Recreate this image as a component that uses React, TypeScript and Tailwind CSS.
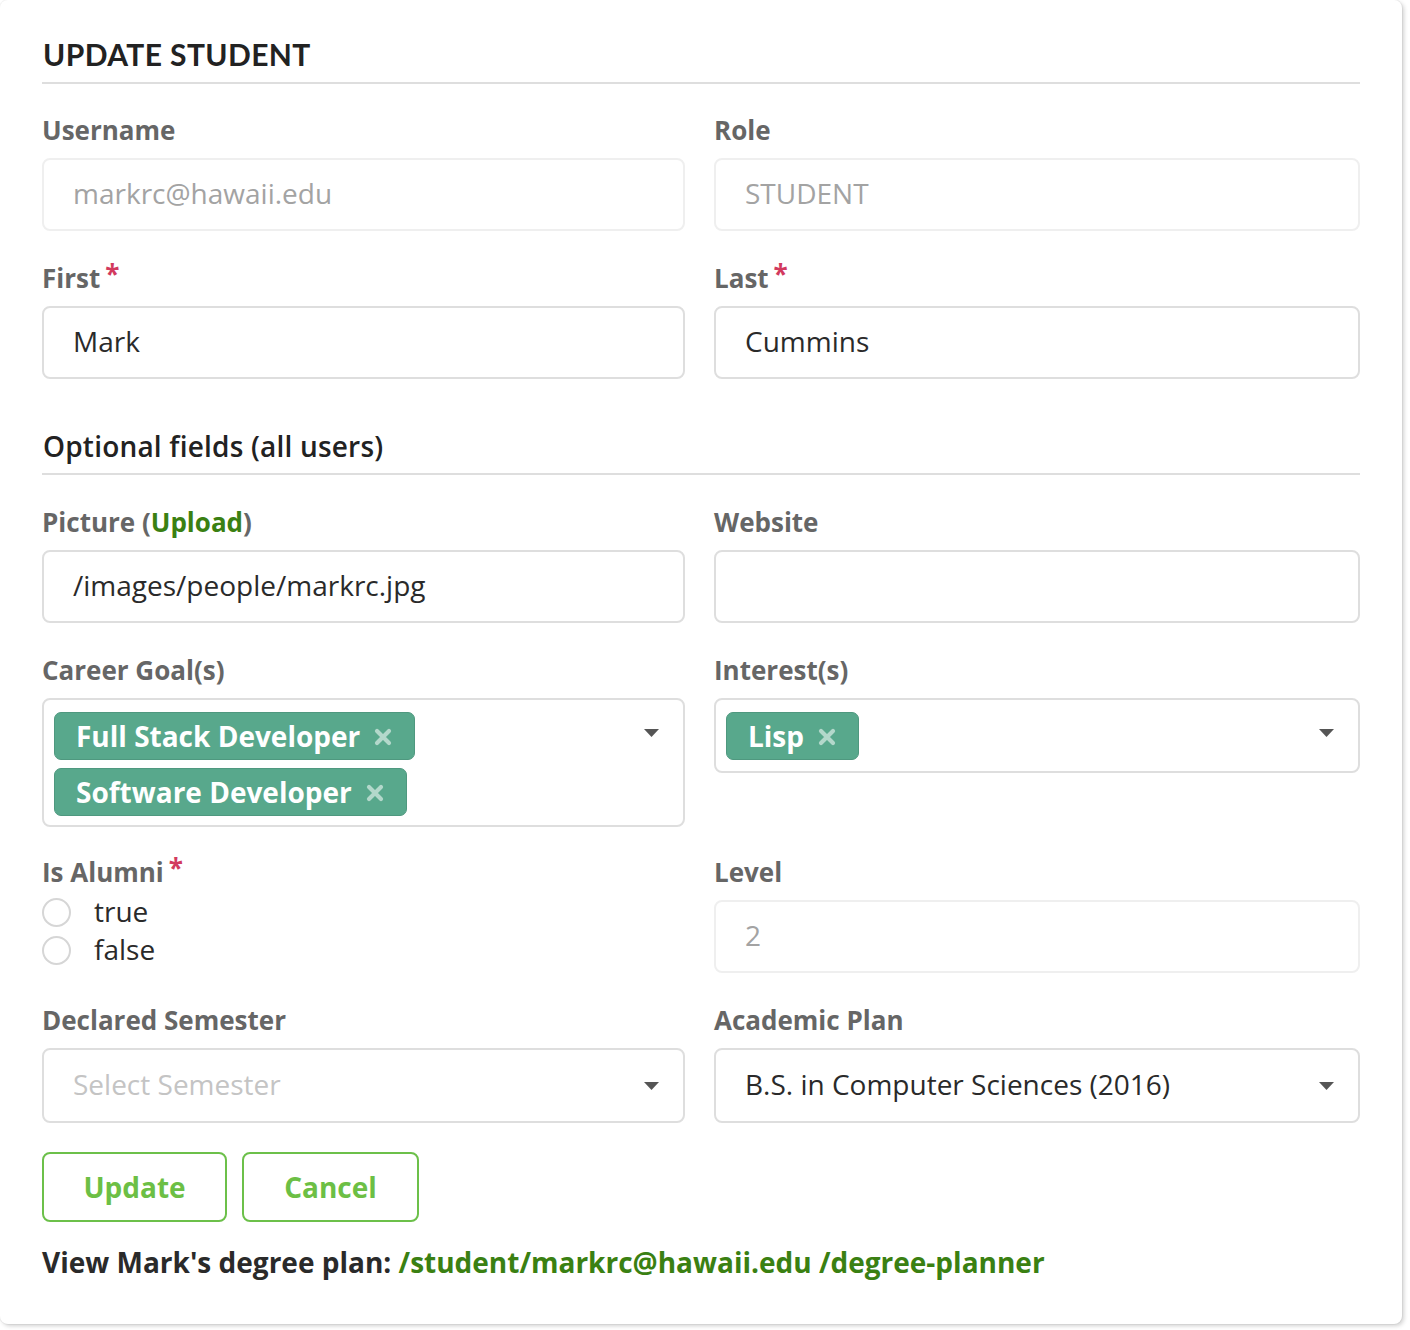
import React from "react";

const OS = "font-['Open_Sans',sans-serif]";
const LATO = "font-['Lato',sans-serif]";

function Label({ children, req }: { children: React.ReactNode; req?: boolean }) {
  return (
    <div className={`${OS} text-[26px] leading-[30px] font-bold text-[#666] h-[30px] flex items-start`}>
      <span>{children}</span>
      {req && <span className="text-[#d23a5e] ml-[5px] text-[26px] leading-[22px]">*</span>}
    </div>
  );
}

function Input({ value, disabled, placeholder }: { value?: string; disabled?: boolean; placeholder?: string }) {
  return (
    <div
      className={`mt-[13px] h-[73px] rounded-[8px] border-2 flex items-center pl-[29px] pb-[3px] ${OS} text-[28px] ${
        disabled ? "border-[#efefef] text-[#a3a3a3]" : "border-[#dedede] text-[#2a2a2a]"
      }`}
    >
      {value}
      {placeholder && <span className="text-[#c4c4c4]">{placeholder}</span>}
    </div>
  );
}

function Arrow() {
  return (
    <svg width="15" height="8" viewBox="0 0 15 8" className="shrink-0">
      <path d="M0 0 L15 0 L7.5 8 Z" fill="#555" />
    </svg>
  );
}

function Tag({ text }: { text: string }) {
  return (
    <div
      className={`h-[48px] inline-flex items-center rounded-[7px] bg-[#58a88c] border border-[#4f987f] pl-[21px] pr-[22px] ${OS} font-bold text-[28px] text-white`}
    >
      <span className="-mt-[1px]">{text}</span>
      <svg width="18" height="18" viewBox="0 0 18 18" className="ml-[14px] mt-[2px]">
        <path d="M3 3 L15 15 M15 3 L3 15" stroke="rgba(255,255,255,0.55)" strokeWidth="4.2" strokeLinecap="round" />
      </svg>
    </div>
  );
}

function Radio({ label }: { label: string }) {
  return (
    <div className="h-[38px] flex items-center">
      <div className="w-[29px] h-[29px] rounded-full border-2 border-[#d6d6d6] bg-white" />
      <span className={`${OS} text-[28px] text-[#2a2a2a] ml-[23px] -mt-[2px]`}>{label}</span>
    </div>
  );
}

export default function App() {
  return (
    <div className="w-[1410px] h-[1330px] bg-white overflow-hidden">
      <div className="w-[1402px] h-[1324px] rounded-[8px] bg-white shadow-[2px_2px_4px_rgba(0,0,0,0.18),0_0_0_1px_rgba(0,0,0,0.04)] pl-[42px] pt-[36px]">
        <div className={`${LATO} font-bold text-[30px] leading-[36px] tracking-[0.4px] text-[#222] pl-[1px]`}>UPDATE STUDENT</div>
        <div className="mt-[10px] h-[2px] bg-[#dedede] w-[1318px]" />

        <div className="mt-[31px] w-[1318px] grid grid-cols-[643px_646px] gap-x-[29px] gap-y-[32px]">
          <div>
            <Label>Username</Label>
            <Input value="markrc@hawaii.edu" disabled />
          </div>
          <div>
            <Label>Role</Label>
            <Input value="STUDENT" disabled />
          </div>
          <div>
            <Label req>First</Label>
            <Input value="Mark" />
          </div>
          <div>
            <Label req>Last</Label>
            <Input value="Cummins" />
          </div>
        </div>

        <div className={`mt-[50px] ${OS} font-semibold text-[28px] leading-[34px] tracking-[0.2px] text-[#222] pl-[1px]`}>
          Optional fields (all users)
        </div>
        <div className="mt-[10px] h-[2px] bg-[#dedede] w-[1318px]" />

        <div className="mt-[32px] w-[1318px] grid grid-cols-[643px_646px] gap-x-[29px] gap-y-[32px]">
          <div>
            <Label>
              Picture (<span className="text-[#3a8012]">Upload</span>)
            </Label>
            <Input value="/images/people/markrc.jpg" />
          </div>
          <div>
            <Label>Website</Label>
            <Input value="" />
          </div>

          <div>
            <Label>Career Goal(s)</Label>
            <div className="mt-[13px] h-[129px] rounded-[8px] border-2 border-[#dedede] pl-[10px] pt-[12px] pr-[24px] flex items-start">
              <div className="flex flex-col gap-[8px] items-start flex-1">
                <Tag text="Full Stack Developer" />
                <Tag text="Software Developer" />
              </div>
              <div className="mt-[17px]">
                <Arrow />
              </div>
            </div>
          </div>
          <div>
            <Label>Interest(s)</Label>
            <div className="mt-[13px] h-[75px] rounded-[8px] border-2 border-[#dedede] pl-[10px] pt-[12px] pr-[24px] flex items-start">
              <div className="flex-1">
                <Tag text="Lisp" />
              </div>
              <div className="mt-[17px]">
                <Arrow />
              </div>
            </div>
          </div>

          <div className="-mt-[2px]">
            <Label req>Is Alumni</Label>
            <div className="mt-[6px]">
              <Radio label="true" />
              <Radio label="false" />
            </div>
          </div>
          <div className="-mt-[2px]">
            <Label>Level</Label>
            <Input value="2" disabled />
          </div>

          <div>
            <Label>Declared Semester</Label>
            <div className={`mt-[13px] h-[75px] rounded-[8px] border-2 border-[#dedede] flex items-center pl-[29px] pr-[24px] ${OS} text-[28px]`}>
              <span className="flex-1 text-[#c4c4c4] -mt-[3px]">Select Semester</span>
              <Arrow />
            </div>
          </div>
          <div>
            <Label>Academic Plan</Label>
            <div className={`mt-[13px] h-[75px] rounded-[8px] border-2 border-[#dedede] flex items-center pl-[29px] pr-[24px] ${OS} text-[28px]`}>
              <span className="flex-1 text-[#2a2a2a] -mt-[3px]">B.S. in Computer Sciences (2016)</span>
              <Arrow />
            </div>
          </div>
        </div>

        <div className="mt-[29px] flex gap-[15px]">
          <div className={`w-[185px] h-[70px] rounded-[8px] border-2 border-[#6cc04a] flex items-center justify-center ${OS} font-bold text-[28px] text-[#6cbf45]`}>
            Update
          </div>
          <div className={`w-[177px] h-[70px] rounded-[8px] border-2 border-[#6cc04a] flex items-center justify-center ${OS} font-bold text-[28px] text-[#6cbf45]`}>
            Cancel
          </div>
        </div>

        <div className={`mt-[23px] ${OS} font-bold text-[28px] leading-[34px] text-[#2a2a2a]`}>
          View Mark's degree plan:{" "}
          <span className="text-[#3a8012]">/student/markrc@hawaii.edu /degree-planner</span>
        </div>
      </div>
    </div>
  );
}
